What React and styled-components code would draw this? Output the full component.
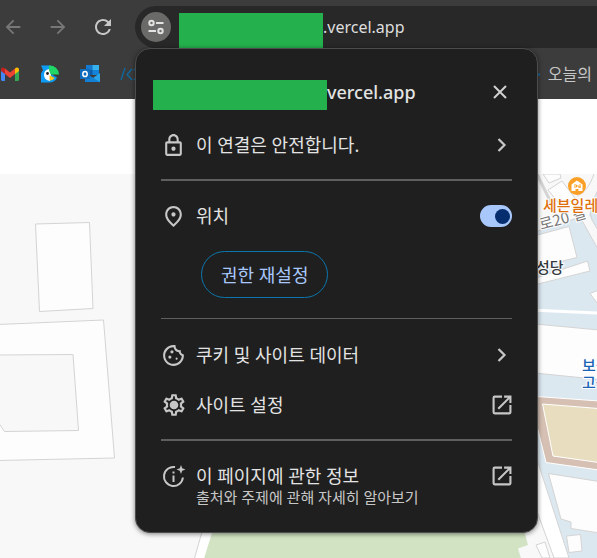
import React from 'react';
import styled, { createGlobalStyle } from 'styled-components';
import {
  MdArrowBack,
  MdArrowForward,
  MdRefresh,
  MdOutlineLock,
  MdOutlinePlace,
  MdOutlineCookie,
  MdOutlineSettings,
} from 'react-icons/md';

const App = () => {
  return (
    <>
      <GlobalStyle />
      <Page>
        <Toolbar>
          <NavButton aria-label='뒤로' $dim>
            <MdArrowBack size={22} />
          </NavButton>
          <NavButton aria-label='앞으로' $dim>
            <MdArrowForward size={22} />
          </NavButton>
          <NavButton aria-label='새로고침'>
            <MdRefresh size={24} />
          </NavButton>
          <AddressBar>
            <SiteInfoButton aria-label='사이트 정보 보기'>
              <TuneIcon />
            </SiteInfoButton>
            <AddressMask />
            <Address>.vercel.app</Address>
          </AddressBar>
        </Toolbar>

        <Bookmarks>
          <Bookmark href='#' aria-label='Gmail'>
            <GmailIcon />
          </Bookmark>
          <Bookmark href='#' aria-label='새'>
            <BirdIcon />
          </Bookmark>
          <Bookmark href='#' aria-label='Outlook'>
            <OutlookIcon />
          </Bookmark>
          <Bookmark href='#' aria-label='코드'>
            <CodeIcon />
          </Bookmark>
          <LastBookmark href='#'>
            <DotIcon />
            오늘의
          </LastBookmark>
        </Bookmarks>

        <SiteHeader />
        <MapArea>
          <StreetMap />
        </MapArea>

        <Popup role='dialog' aria-label='사이트 정보'>
          <PopupHeader>
            <TitleMask />
            <Title>vercel.app</Title>
            <CloseButton aria-label='닫기'>
              <CloseIcon />
            </CloseButton>
          </PopupHeader>

          <Section>
            <Row>
              <MdOutlineLock size={25} />
              <Label>이 연결은 안전합니다.</Label>
              <ChevronIcon />
            </Row>
          </Section>

          <Divider $thick />

          <Section>
            <PermissionRow>
              <MdOutlinePlace size={25} />
              <Label as='label' htmlFor='location'>
                위치
              </Label>
              <Toggle id='location' type='checkbox' defaultChecked />
            </PermissionRow>
            <ResetButton>권한 재설정</ResetButton>
          </Section>

          <Divider />

          <Section>
            <Row>
              <MdOutlineCookie size={25} />
              <Label>쿠키 및 사이트 데이터</Label>
              <ChevronIcon />
            </Row>
            <Row>
              <Gear>
                <MdOutlineSettings size={26} />
              </Gear>
              <Label>사이트 설정</Label>
              <OpenIcon />
            </Row>
          </Section>

          <Divider $thick />

          <Section>
            <Row>
              <AboutIcon />
              <Label>이 페이지에 관한 정보</Label>
              <OpenIcon />
              <Description>출처와 주제에 관해 자세히 알아보기</Description>
            </Row>
          </Section>
        </Popup>
      </Page>
    </>
  );
};

export default App;

// icons

const TuneIcon = () => (
  <svg width='18' height='18' viewBox='0 0 18 18' fill='none' stroke='#e3e3e3' strokeWidth='2'>
    <circle cx='4.5' cy='5' r='2.2' />
    <path d='M9 5h7.5M1.5 13H9' />
    <circle cx='13.5' cy='13' r='2.2' />
  </svg>
);

const GmailIcon = () => (
  <svg width='20' height='20' viewBox='0 0 20 20'>
    <path d='M1 6v9.500q0 1.500 1.500 1.500H5V8.500z' fill='#4285f4' />
    <path d='M19 6v9.500q0 1.500-1.500 1.500H15V8.500z' fill='#34a853' />
    <path d='M1 5.500Q1 3.500 3 3.500 4 3.500 5 4.500V10L1 7z' fill='#c5221f' />
    <path d='M19 5.500Q19 3.500 17 3.500 16 3.500 15 4.500V10l4-3z' fill='#fbbc04' />
    <path d='M5 4.500l5 4 5-4V10l-5 4-5-4z' fill='#ea4335' />
  </svg>
);

const BirdIcon = () => (
  <svg width='20' height='20' viewBox='0 0 20 20'>
    <path d='M1 1.500h10q-2 3-1 8l7 4q-2 5-8 5H1V9.500L3 6z' fill='#0c9cf5' />
    <path d='M9 5q-5 1-5 6t6 6l1-6z' fill='#fff' />
    <path d='M9 1.500q9 0 10 9h-8q-3-4-2-9z' fill='#1fd667' />
    <path d='M9.500 11l5 3q-1 2-5 2.500z' fill='#ffc21a' />
    <circle cx='7.500' cy='9.500' r='1.400' fill='#222' />
  </svg>
);

const OutlookIcon = () => (
  <svg width='20' height='20' viewBox='0 0 20 20'>
    <path d='M6 1h13v10H6z' fill='#0f5ba8' />
    <path d='M6 1h6.500v5H6z' fill='#1479cf' />
    <path d='M12.500 1H19v5h-6.500z' fill='#35b1ee' />
    <path d='M12.500 6H19v5h-6.500z' fill='#1583d8' />
    <path d='M5 9l8 5 7-5v9H5z' fill='#2aa4e8' />
    <path d='M5 9l15 9H5z' fill='#1280d4' />
    <path d='M0 5h10v10H0z' fill='#0f6cbd' />
    <ellipse cx='5' cy='10' rx='2.200' ry='2.600' fill='none' stroke='#fff' strokeWidth='1.500' />
  </svg>
);

const CodeIcon = () => (
  <svg width='20' height='20' viewBox='0 0 20 20' fill='none' stroke='#0e6aa3' strokeWidth='1.300'>
    <path d='M1 16L5 4M12 5l-5 5.500 5 5.500M14 5l5 5.500-5 5.500' />
  </svg>
);

const DotIcon = () => (
  <svg width='16' height='16' viewBox='0 0 16 16'>
    <path d='M13 7.500h3v2h-3z' fill='#0e6aa3' />
  </svg>
);

const CloseIcon = () => (
  <svg width='20' height='20' viewBox='0 0 20 20' stroke='#d0d0d0' strokeWidth='2'>
    <path d='M4 4l12 12M16 4L4 16' />
  </svg>
);

const ChevronIcon = () => (
  <svg width='20' height='20' viewBox='0 0 20 20' fill='none' stroke='#c7c7c7' strokeWidth='2.2'>
    <path d='M6.500 4l6 6-6 6' />
  </svg>
);

const OpenIcon = () => (
  <svg width='20' height='20' viewBox='2.500 2.500 19 19' fill='#c7c7c7'>
    <path d='M19 19H5V5h7V3H5a2 2 0 0 0-2 2v14a2 2 0 0 0 2 2h14c1.100 0 2-.9 2-2v-7h-2v7zM14 3v2h3.590l-9.830 9.830 1.410 1.410L19 6.410V10h2V3h-7z' />
  </svg>
);

const AboutIcon = () => (
  <svg width='25' height='25' viewBox='0 0 25 25' fill='none' stroke='#c7c7c7' strokeWidth='2'>
    <path d='M14 3.100A9.500 9.500 0 1 0 21.900 13.500' />
    <path d='M12.500 11.500v6.500M12.500 7.500v2' />
    <path d='M20 1l1.200 3.300L24.500 5.500l-3.300 1.200L20 10l-1.200-3.300L15.500 5.500l3.300-1.200z' fill='#c7c7c7' stroke='none' />
  </svg>
);

// map drawing behind the popup

const StreetMap = () => (
  <svg width='100%' height='384' fill='#fdfdfe' stroke='#d4d4d4' aria-hidden='true'>
    {/* buildings on the left */}
    <path d='M35.500 50l54-1.500 3.500 86-53.500 3z' />
    <path d='M-2 150.500L103.500 146l11 138L-2 286.500z' />
    <path d='M-2 181l75-.5 5.500 76-74 1L-2 248z' fill='#f8f8f8' />

    {/* park */}
    <path d='M202.500 356L194 386h10l8-30z' fill='#fff' stroke='none' />
    <path d='M202.500 356L194 386' />
    <path d='M213 356h311l4 15-10 3.500 3 10H204z' fill='#d2e3c3' stroke='none' />

    {/* water coloured blocks */}
    <path d='M538 57l42-14 17 30v311h-29l-30-97z' fill='#dce8f0' stroke='none' />
    <path d='M597 17l-8 24 8 14z' fill='#dce8f0' stroke='none' />
    <path d='M538 57l42-14 19 34M594 0q-6 18-17 22M599 14q-12 22-7 32l7 12' fill='none' />
    <path d='M543 0l6 9 12-5-1-4zM548 16l14-9 13 17-13 9z' />
    <path d='M537 0l17 35' strokeWidth='3' fill='none' />
    <path d='M530 63l39-10.500 8 31L530 95z' />
    <path d='M530 106l57.500-19 2.500 10-60 15z' />
    <path d='M599 116l-9 3.500 9 12z' />
    <path d='M530 136l69 3' stroke='#fff' strokeWidth='3' />
    <path d='M530 149.500l69 6.500v49.500l-69-7z' />

    {/* main road */}
    <path d='M530 222l69 5v69l-53-7.500L530 224z' fill='#d6c0b3' stroke='#fff' />
    <path d='M542.500 230l56 4.500v54L553 282z' fill='#e8debf' stroke='#fff' />

    <path d='M530 264l39 120h-15l-24-66z' fill='#fff' />
    <path d='M548.500 299.500L599 307.500V359l-28-4.500V348l-10-3z' />
    <path d='M566.500 362l14-1.500 1.500 16.500-13 1.500zM536 371l9-3 5 16h-8z' />

    <MapText x='541' y='56' fill='#777' transform='rotate(-15 541 56)'>
      로20 길
    </MapText>
    <circle cx='577' cy='12' r='9' fill='#fba026' stroke='none' />
    <path d='M571.500 10.500l5.500-4 5.500 4V17h-4v-2h-3v2h-4z' fill='#fff' stroke='none' />
    <path d='M574 11h2.500v2H574m4-2v2h3m-1-3v4' fill='none' stroke='#fba026' />
    <MapText x='543' y='37' fill='#e0700c' $bold>
      세븐일레
    </MapText>
    <MapText x='536' y='99' fill='#33383d' $bold>
      성당
    </MapText>
    <MapText x='582' y='197' fill='#1a63b5' $bold>
      보성
    </MapText>
    <MapText x='582' y='214' fill='#1a63b5' $bold>
      고등
    </MapText>
  </svg>
);

const GlobalStyle = createGlobalStyle`
  * {
    box-sizing: border-box;
  }

  body {
    margin: 0;
    overflow: hidden;
    background-color: #fff;
    font-family: 'Noto Sans', 'Noto Sans CJK KR', sans-serif;
  }

  button {
    border: none;
    background: none;
    padding: 0;
    font-family: inherit;
  }

  svg {
    display: block;
    flex-shrink: 0;
  }
`;

const Page = styled.div`
  position: relative;
  display: flex;
  flex-direction: column;
  min-height: 100vh;
`;

const Toolbar = styled.header`
  display: flex;
  align-items: center;
  gap: 20px;
  padding-top: 6px;
  background-color: #3c3c3c;
`;

const NavButton = styled.button`
  display: flex;
  justify-content: center;
  width: 25px;
  color: ${({ $dim }) => ($dim ? '#777' : '#c7c7c7')};
`;

const AddressBar = styled.div`
  display: flex;
  flex: 1;
  align-items: center;
  height: 42px;
  padding-left: 6px;
  border-radius: 21px 0 0 21px;
  background-color: #282828;
`;

const SiteInfoButton = styled.button`
  display: flex;
  align-items: center;
  justify-content: center;
  width: 30px;
  height: 30px;
  margin-right: 8px;
  border-radius: 50%;
  background-color: #6a6a68;
`;

const AddressMask = styled.span`
  align-self: flex-end;
  width: 144px;
  height: 35px;
  background-color: #24b14d;
`;

const Address = styled.span`
  color: #dedede;
  font-size: 16px;
  line-height: 24px;
`;

const Bookmarks = styled.nav`
  display: flex;
  align-items: center;
  gap: 20px;
  height: 51px;
  padding-right: 5px;
  background-color: #3c3c3c;
`;

const Bookmark = styled.a`
  display: flex;
  align-items: center;
  color: #c7c7c7;
  text-decoration: none;
`;

const LastBookmark = styled(Bookmark)`
  gap: 8px;
  margin-left: auto;
  font-size: 16px;
  line-height: 24px;
`;

const SiteHeader = styled.div`
  height: 75px;
  background-color: #fff;
`;

const MapArea = styled.main`
  flex: 1;
  overflow: hidden;
  background-color: #f8f8f8;
`;

const MapText = styled.text`
  stroke: #fff;
  stroke-width: 2px;
  paint-order: stroke;
  font-size: 15px;
  font-weight: ${({ $bold }) => ($bold ? 500 : 400)};
  font-family: 'Noto Sans CJK KR', sans-serif;
`;

/* opens over the page, under the address bar */
const Popup = styled.section`
  position: absolute;
  top: 48px;
  left: 135px;
  width: 403px;
  padding: 31px 0 25px;
  border: 1px solid #4c4c4c;
  border-radius: 15px;
  background-color: #1f1f1f;
  box-shadow: 0 1px 5px rgba(0, 0, 0, 0.5);
  color: #e3e3e3;
`;

const PopupHeader = styled.div`
  display: flex;
  align-items: flex-start;
  padding: 0 27px 0 17px;
  margin-bottom: 10px;
`;

const TitleMask = styled.span`
  width: 174px;
  height: 30px;
  background-color: #24b14d;
`;

const Title = styled.h1`
  flex: 1;
  margin: 0;
  font-size: 18px;
  font-weight: 500;
  line-height: 24px;
`;

const CloseButton = styled.button`
  display: flex;
  align-items: center;
  height: 24px;
`;

const Section = styled.div`
  padding: 0 25px;
`;

const Row = styled.button`
  display: grid;
  grid-template-columns: 25px 1fr auto;
  grid-template-rows: 50px;
  column-gap: 10px;
  align-items: center;
  width: 100%;
  color: #c7c7c7;
  text-align: left;
`;

const PermissionRow = styled(Row).attrs({ as: 'div' })``;

const Label = styled.span`
  color: #e3e3e3;
  font-size: 18px;
  line-height: 24px;
`;

const Description = styled.span`
  grid-column: 2 / -1;
  margin-top: -14px;
  color: #c7c7c7;
  font-size: 15px;
  line-height: 20px;
`;

const Divider = styled.hr`
  height: ${({ $thick }) => ($thick ? 2 : 1)}px;
  margin: ${({ $thick }) => ($thick ? '9px 25px 10px' : '20px 25px 11px')};
  border: none;
  background-color: #5f5f5f;
`;

const Toggle = styled.input`
  display: flex;
  align-items: center;
  justify-content: flex-end;
  width: 32px;
  height: 22px;
  margin: 0;
  padding: 2px;
  border-radius: 11px;
  background-color: #a8c7fa;
  appearance: none;

  &::before {
    content: '';
    width: 15px;
    height: 15px;
    border-radius: 50%;
    background-color: #062e6f;
  }

  &:not(:checked) {
    justify-content: flex-start;
  }
`;

const ResetButton = styled.button`
  display: block;
  height: 47px;
  margin: 10px 0 0 40px;
  padding: 0 19px;
  border: 1px solid #0b76ad;
  border-radius: 24px;
  color: #a8c7fa;
  font-size: 18px;
  line-height: 24px;
`;

const Gear = styled.span`
  display: grid;
  place-items: center;

  > * {
    grid-area: 1 / 1;
  }

  /* filled hub */
  &::after {
    content: '';
    grid-area: 1 / 1;
    width: 6px;
    height: 6px;
    border-radius: 50%;
    background-color: #c7c7c7;
  }
`;
